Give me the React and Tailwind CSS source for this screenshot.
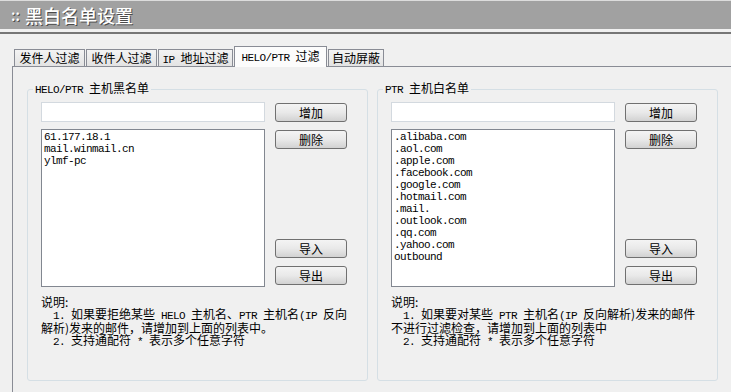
import React from 'react';

const cjk = "font-['Noto_Sans_CJK_SC',sans-serif]";
const mono = "font-['Liberation_Mono','Noto_Sans_CJK_SC',monospace] text-[11px] tracking-[-0.6px]";

const blackList = ['61.177.18.1', 'mail.winmail.cn', 'ylmf-pc'];
const whiteList = [
  '.alibaba.com',
  '.aol.com',
  '.apple.com',
  '.facebook.com',
  '.google.com',
  '.hotmail.com',
  '.mail.',
  '.outlook.com',
  '.qq.com',
  '.yahoo.com',
  'outbound',
];

// latin runs inside chinese text, sized like the old bitmap font
function L({ children }) {
  return <span className={mono}>{children}</span>;
}

function Btn({ children, className = '' }) {
  return (
    <button
      className={`w-[72px] h-[19px] rounded-[3px] border border-[#707070] bg-linear-to-b from-[#f4f4f4] via-[#e9e9e9] to-[#d2d2d2] text-[12px] leading-[16px] text-black ${cjk} ${className}`}
    >
      {children}
    </button>
  );
}

function Tab({ children, active, w }) {
  if (active) {
    return (
      <div
        className={`${w} h-[21px] -mb-[1px] relative z-10 border border-b-0 border-[#898c95] bg-[#fcfcfc] text-[12px] leading-[14px] pt-[2px] text-center ${cjk}`}
      >
        {children}
      </div>
    );
  }
  return (
    <div
      className={`${w} h-[17px] border border-b-0 border-[#898c95] bg-linear-to-b from-[#f3f3f3] to-[#e3e3e3] text-[12px] leading-[14px] pt-[1px] text-center ${cjk}`}
    >
      {children}
    </div>
  );
}

function Group({ title, items, notes }) {
  return (
    <fieldset className="w-[341px] h-[299px] border border-[#d5dfe5] rounded-[3px]">
      <legend className={`ml-[5px] px-[2px] text-[12px] leading-[12px] ${cjk}`}>{title}</legend>
      <div className="pl-[13px] pt-[6px]">
        <div className="flex items-start">
          <input className="w-[224px] h-[20px] border border-[#d3d9df] bg-white outline-none" />
          <Btn className="ml-[10px] mt-[1px]">增加</Btn>
        </div>

        <div className="flex mt-[7px]">
          <div className="w-[224px] h-[158px] border border-[#828790] bg-white pl-[2px] pt-[1px]">
            {items.map((it) => (
              <div key={it} className={`${mono} leading-[12px]`}>
                {it}
              </div>
            ))}
          </div>
          <div className="ml-[10px] flex flex-col">
            <Btn className="mt-[1px]">删除</Btn>
            <Btn className="mt-auto">导入</Btn>
            <Btn className="mt-[8px] mb-[2px]">导出</Btn>
          </div>
        </div>

        <div className={`mt-[9px] text-[12px] leading-[12px] whitespace-pre ${cjk}`}>{notes}</div>
      </div>
    </fieldset>
  );
}

export default function App() {
  return (
    <div className="w-[731px] h-[392px] overflow-hidden bg-[#f0f0f0] text-black">
      {/* title bar */}
      <div className="h-[29px] border-t border-[#dcdcdc] bg-[#a1a1a1] flex items-center pl-[11px] text-white text-[18px] font-medium [text-shadow:1px_1px_0_#4a4a4a]">
        <span className={`${cjk} text-[15px] mr-[5px]`}>::</span>
        <span className={cjk}>黑白名单设置</span>
      </div>
      <div className="mt-[3px] h-[2px] bg-[#767676]" />

      {/* tabs */}
      <div className="pt-[12px] pl-[14px] flex items-end gap-[1px] h-[32px]">
        <Tab w="w-[71px]">发件人过滤</Tab>
        <Tab w="w-[71px]">收件人过滤</Tab>
        <Tab w="w-[75px]">
          <L>IP </L>地址过滤
        </Tab>
        <Tab w="w-[93px]" active>
          <L>HELO/PTR </L>过滤
        </Tab>
        <Tab w="w-[56px]">自动屏蔽</Tab>
      </div>

      {/* tab panel */}
      <div className="ml-[12px] h-[400px] border-l border-t border-[#898c95] pl-[14px] pt-[15px] flex gap-[9px]">
        <Group
          title={
            <>
              <L>HELO/PTR </L>主机黑名单
            </>
          }
          items={blackList}
          notes={
            <>
              <div>说明:</div>
              <div>
                <L>  1. </L>如果要拒绝某些<L> HELO </L>主机名、<L>PTR </L>主机名<L>(IP </L>反向
              </div>
              <div>解析)发来的邮件，请增加到上面的列表中。</div>
              <div>
                <L>  2. </L>支持通配符<L> * </L>表示多个任意字符
              </div>
            </>
          }
        />
        <Group
          title={
            <>
              <L>PTR </L>主机白名单
            </>
          }
          items={whiteList}
          notes={
            <>
              <div>说明:</div>
              <div>
                <L>  1. </L>如果要对某些<L> PTR </L>主机名<L>(IP </L>反向解析)发来的邮件
              </div>
              <div>不进行过滤检查，请增加到上面的列表中</div>
              <div>
                <L>  2. </L>支持通配符<L> * </L>表示多个任意字符
              </div>
            </>
          }
        />
      </div>
    </div>
  );
}
